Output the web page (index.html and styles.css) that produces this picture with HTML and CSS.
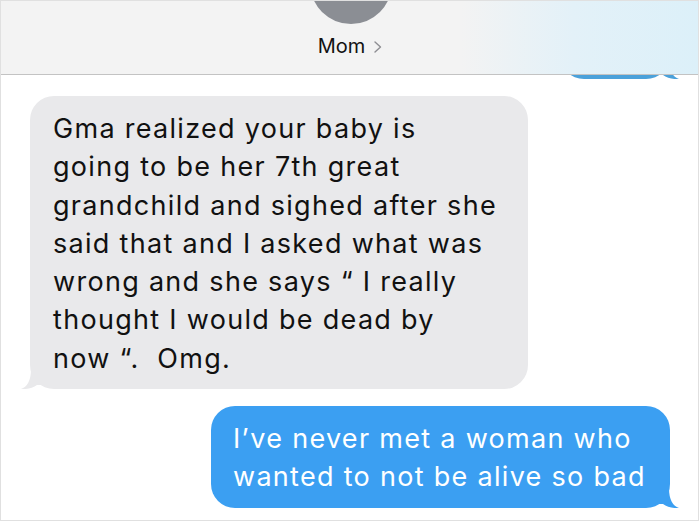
FILE: index.html
```html
<!DOCTYPE html>
<html lang="en">
<head>
<meta charset="utf-8">
<title>Mom</title>
<link rel="stylesheet" href="styles.css">
</head>
<body>
<div class="screen">
  <div class="thread">
    <div class="msg msg-out msg-prev">
      <div class="bubble bubble-out bubble-prev"></div>
      <svg class="tail tail-out" viewBox="0 0 20 20" width="20" height="20"><path d="M10,0 C10,12 14,18 20,20 C14,20.5 8,19 4,16 L0,16 L0,0 Z"/></svg>
    </div>
    <div class="msg msg-in">
      <div class="bubble bubble-in">Gma realized your baby is<br>going to be her 7th great<br>grandchild and sighed after she<br>said that and I asked what was<br>wrong and she says “ I really<br>thought I would be dead by<br>now “.&nbsp; Omg.</div>
      <svg class="tail tail-in" viewBox="0 0 20 20" width="20" height="20"><path d="M10,0 C10,12 6,18 0,20 C6,20.5 12,19 16,16 L20,16 L20,0 Z"/></svg>
    </div>
    <div class="msg msg-out">
      <div class="bubble bubble-out">I’ve never met a woman who<br>wanted to not be alive so bad</div>
      <svg class="tail tail-out" viewBox="0 0 20 20" width="20" height="20"><path d="M10,0 C10,12 14,18 20,20 C14,20.5 8,19 4,16 L0,16 L0,0 Z"/></svg>
    </div>
  </div>
  <header class="header">
    <div class="avatar"></div>
    <div class="contact">
      <span class="contact-name">Mom</span>
      <svg class="chevron" viewBox="0 0 8 12" width="8" height="12"><path d="M1,1 L6.5,6 L1,11" fill="none" stroke="#8e8e93" stroke-width="1.4" stroke-linecap="round" stroke-linejoin="round"/></svg>
    </div>
  </header>
</div>
</body>
</html>
```
FILE: styles.css
```css
* { box-sizing: border-box; }
html, body { margin: 0; padding: 0; background: #ffffff; }
.screen {
  position: relative;
  width: 699px;
  height: 521px;
  overflow: hidden;
  background: #ffffff;
  border: 1px solid #e0e0e0;
  font-family: Inter, "Liberation Sans", Arial, sans-serif;
}
.header {
  position: absolute;
  top: 0;
  left: 0;
  right: 0;
  height: 74px;
  background: linear-gradient(90deg, #f3f3f3 0%, #f3f3f3 66%, #e3f1f8 82%, #dcf0f9 100%);
  border-bottom: 1px solid #c3c3c3;
  display: flex;
  justify-content: center;
}
.avatar {
  position: absolute;
  top: -59px;
  left: 309px;
  width: 82px;
  height: 82px;
  border-radius: 50%;
  background: #8b8e94;
}
.contact {
  margin-top: 33px;
  margin-left: 1px;
  display: flex;
  align-items: center;
  gap: 9px;
  height: 24px;
}
.contact-name {
  font-size: 20px;
  color: #111111;
}
.chevron { display: block; margin-top: 2px; }

.thread {
  display: flex;
  flex-direction: column;
  gap: 17px;
  padding: 17px 0 0 0;
}
.msg { position: relative; display: flex; }
.msg-in { padding-left: 29px; }
.msg-out { justify-content: flex-end; padding-right: 28px; }
.bubble {
  font-size: 27px;
  line-height: 38.3px;
  letter-spacing: 1.3px;
  border-radius: 24px;
  white-space: nowrap;
}
.bubble-in {
  width: 498px;
  background: #e9e9eb;
  color: #111111;
  padding: 14px 10px 11px 23px;
}
.bubble-out {
  width: 459px;
  background: #3b9ff2;
  color: #ffffff;
  padding: 14px 10px 11px 22px;
}
.bubble-prev { width: 110px; height: 61px; background: #4ba1da; }
.tail { position: absolute; bottom: 0; }
.tail-in { left: 20px; fill: #e9e9eb; }
.tail-out { right: 19px; fill: #3b9ff2; }
.msg-prev .tail-out { fill: #4ba1da; }
```
